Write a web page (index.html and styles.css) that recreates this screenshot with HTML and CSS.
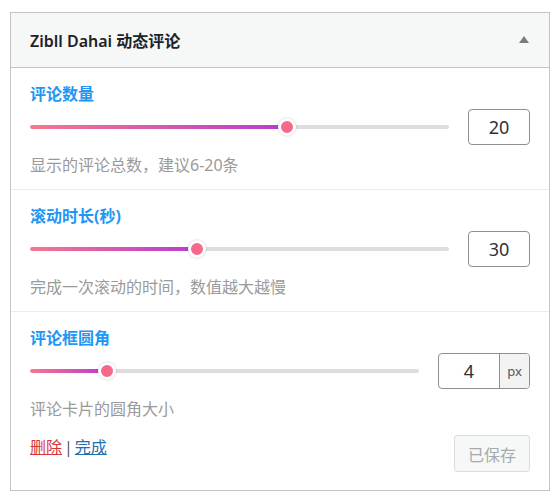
FILE: index.html
```html
<!DOCTYPE html>
<html lang="zh-CN">
<head>
<meta charset="utf-8">
<title>Zibll Dahai 动态评论</title>
<link rel="stylesheet" href="styles.css">
</head>
<body>
<div class="widget">
  <div class="widget-head">
    <h3 class="widget-title">Zibll Dahai 动态评论</h3>
    <svg class="toggle" width="10" height="7" viewBox="0 0 10 7"><path d="M5 0 L10 7 L0 7 Z" fill="#787c82"/></svg>
  </div>
  <div class="widget-body">
    <div class="field">
      <div class="label">评论数量</div>
      <div class="row">
        <div class="slider">
          <div class="track"><div class="fill" style="width:61.4%"></div></div>
          <div class="thumb" style="left:61.4%"></div>
        </div>
        <div class="num">20</div>
      </div>
      <div class="hint">显示的评论总数，建议6-20条</div>
    </div>
    <div class="field">
      <div class="label">滚动时长(秒)</div>
      <div class="row">
        <div class="slider">
          <div class="track"><div class="fill" style="width:39.8%"></div></div>
          <div class="thumb" style="left:39.8%"></div>
        </div>
        <div class="num">30</div>
      </div>
      <div class="hint">完成一次滚动的时间，数值越大越慢</div>
    </div>
    <div class="field last">
      <div class="label">评论框圆角</div>
      <div class="row">
        <div class="slider">
          <div class="track"><div class="fill" style="width:19.8%"></div></div>
          <div class="thumb" style="left:19.8%"></div>
        </div>
        <div class="num-group">
          <div class="num-in">4</div>
          <div class="addon">px</div>
        </div>
      </div>
      <div class="hint">评论卡片的圆角大小</div>
      <div class="actions">
        <div class="links"><a class="del" href="#">删除</a><span class="sep">|</span><a class="done" href="#">完成</a></div>
        <button class="save" disabled>已保存</button>
      </div>
    </div>
  </div>
</div>
</body>
</html>
```
FILE: styles.css
```css
* { box-sizing: border-box; }
body {
  margin: 0;
  padding: 12px 10px;
  background: #ffffff;
  font-family: "Noto Sans", "Noto Sans CJK SC", sans-serif;
  color: #1d2327;
}
.widget {
  width: 540px;
  border: 1px solid #c3c4c7;
  background: #fff;
}
.widget-head {
  height: 55px;
  background: #f6f7f7;
  border-bottom: 1px solid #c3c4c7;
  display: flex;
  align-items: center;
  justify-content: space-between;
  padding: 0 20px 0 19px;
}
.widget-title {
  margin: 0;
  font-size: 16px;
  font-weight: 600;
  color: #1d2327;
}
.toggle { display: block; margin-top: -2px; }
.field {
  padding: 14px 19px 12px;
  border-bottom: 1px solid #ececec;
}
.field.last { border-bottom: 0; padding-bottom: 18px; }
.label {
  font-size: 16px;
  line-height: 24px;
  font-weight: 700;
  color: #2196f3;
}
.row {
  margin-top: 3px;
  height: 36px;
  display: flex;
  align-items: center;
  gap: 19px;
}
.slider {
  position: relative;
  flex: 1;
  height: 18px;
  display: flex;
  align-items: center;
}
.track {
  width: 100%;
  height: 4px;
  border-radius: 2px;
  background: #dddddd;
  overflow: hidden;
}
.fill {
  height: 100%;
  background: linear-gradient(90deg, #f7768f, #b63cd0);
  border-radius: 2px;
}
.thumb {
  position: absolute;
  top: 0;
  width: 18px;
  height: 18px;
  margin-left: -9px;
  border-radius: 50%;
  background: #f7698a;
  border: 3px solid #fff;
  box-shadow: 0 0 2px rgba(0,0,0,0.25);
}
.num {
  width: 62px;
  height: 36px;
  border: 1px solid #8c8f94;
  border-radius: 4px;
  display: flex;
  align-items: center;
  justify-content: center;
  font-size: 18px;
  color: #2c3338;
}
.num-group {
  width: 92px;
  height: 36px;
  border: 1px solid #8c8f94;
  border-radius: 4px;
  display: flex;
  overflow: hidden;
}
.num-in {
  flex: 1;
  display: flex;
  align-items: center;
  justify-content: center;
  font-size: 18px;
  color: #2c3338;
}
.addon {
  width: 30px;
  border-left: 1px solid #8c8f94;
  background: #f3f3f4;
  display: flex;
  align-items: center;
  justify-content: center;
  font-size: 13px;
  color: #50575e;
}
.hint {
  margin-top: 8px;
  font-size: 16px;
  line-height: 24px;
  color: #9a9a9a;
}
.actions {
  margin-top: 14px;
  display: flex;
  justify-content: space-between;
  align-items: flex-start;
}
.links {
  font-size: 16px;
  line-height: 24px;
  color: #50575e;
}
.links a { text-decoration: underline; }
.del { color: #d63638; }
.done { color: #2271b1; }
.sep { color: #50575e; margin: 0 2px; }
.save {
  width: 76px;
  height: 37px;
  border: 1px solid #dcdcde;
  border-radius: 3px;
  background: #f6f7f7;
  color: #a7aaad;
  font-family: "Noto Sans", "Noto Sans CJK SC", sans-serif;
  font-size: 16px;
  padding: 0;
}
```
